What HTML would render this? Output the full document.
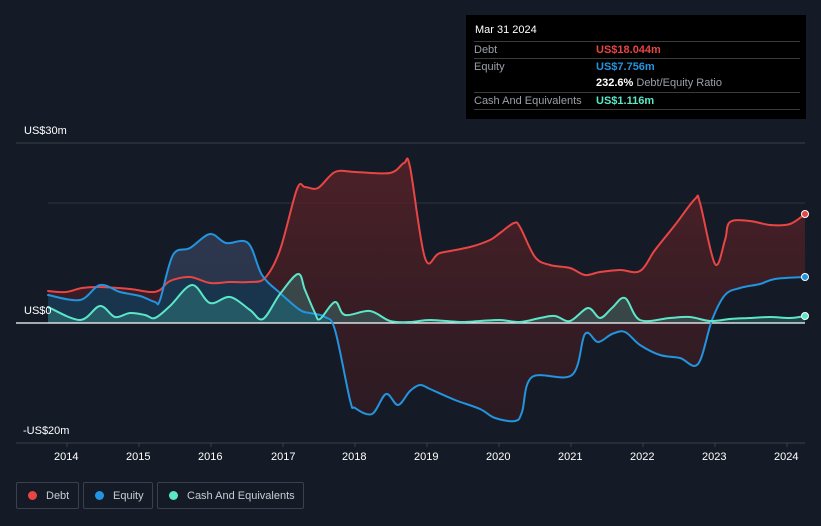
<!DOCTYPE html>
<html><head><meta charset="utf-8"><style>
body{margin:0;width:821px;height:526px;background:#151b26;font-family:"Liberation Sans",sans-serif;overflow:hidden;position:relative}
.t{position:absolute;color:#fff;font-size:11px}
.lg{position:absolute;top:482px;height:27px;border:1px solid #3a404c;border-radius:2px;color:#c9ccd1;font-size:11px;line-height:27px;box-sizing:border-box}
.lg i{display:inline-block;width:9px;height:9px;border-radius:50%;margin:0 9px 0 11px;vertical-align:-1px}
#tt{position:absolute;left:466px;top:15px;width:340px;height:104px;background:#000;}
#tt .r{position:absolute;left:8px;right:6px;height:17px;border-top:1px solid #3a3a3a;font-size:11px;color:#9aa0a6;line-height:17px}
#tt .v{position:absolute;left:122px}
</style></head><body>
<svg id="s" width="821" height="526" style="position:absolute;left:0;top:0">
<defs>
<linearGradient id="gd" x1="0" y1="0" x2="0" y2="1"><stop offset="0" stop-color="#5a2228" stop-opacity=".8"/><stop offset="1" stop-color="#3a1a20" stop-opacity=".6"/></linearGradient>
</defs>
<line x1="16" y1="143" x2="805" y2="143" stroke="#3a404a"/>
<line x1="48" y1="203" x2="805" y2="203" stroke="#30363f"/>
<line x1="16" y1="443" x2="805" y2="443" stroke="#3a404a"/>
<g stroke="#3a404a"><line x1="67" y1="443" x2="67" y2="447"/><line x1="139" y1="443" x2="139" y2="447"/><line x1="211" y1="443" x2="211" y2="447"/><line x1="283" y1="443" x2="283" y2="447"/><line x1="355" y1="443" x2="355" y2="447"/><line x1="427" y1="443" x2="427" y2="447"/><line x1="499" y1="443" x2="499" y2="447"/><line x1="571" y1="443" x2="571" y2="447"/><line x1="643" y1="443" x2="643" y2="447"/><line x1="715" y1="443" x2="715" y2="447"/><line x1="787" y1="443" x2="787" y2="447"/></g>
<path id="fd" fill="url(#gd)"/>
<path id="fe" fill="#1e4a6e" fill-opacity=".55"/>
<path id="fc" fill="#3aa89a" fill-opacity=".3"/>
<line x1="16" y1="323" x2="805" y2="323" stroke="#fff" stroke-width="1.2"/>
<g fill="none" stroke-width="2" stroke-linejoin="round" stroke-linecap="round">
<path id="ld" stroke="#e84545"/><path id="le" stroke="#2394df"/><path id="lc" stroke="#5ce6c8"/>
</g>
<circle cx="805" cy="214" r="3.5" fill="#e84545" stroke="#fff" stroke-width="1"/>
<circle cx="805" cy="277" r="3.5" fill="#2394df" stroke="#fff" stroke-width="1"/>
<circle cx="805" cy="316" r="3.5" fill="#5ce6c8" stroke="#fff" stroke-width="1"/>
</svg>
<script>
var D=[48,291,66,292,82,288,100,287,130,289,150,292,160,290,170,281,190,277,210,283,230,282,250,282,265,278,280,250,297,189,305,187,318,188,335,172,355,172,390,173,404,163,410,167,425,258,440,253,470,247,490,240,500,233,514,223,520,227,535,257,550,265,570,268,585,275,600,272,620,270,640,271,655,250,675,225,695,199,700,203,715,264,725,240,730,222,750,221,770,225,790,224,805,214];
var E=[48,295,80,300,100,285,120,292,140,296,155,302,160,300,173,255,190,248,210,234,226,243,248,243,262,275,280,293,300,310,310,313,325,317,335,330,350,400,355,408,372,414,386,394,398,405,410,391,420,385,430,389,455,400,480,409,495,418,515,421,522,412,532,377,572,375,585,334,598,342,612,334,625,332,640,345,660,355,680,358,698,364,712,320,725,295,740,288,760,284,775,279,805,277];
var C=[48,307,80,320,100,306,115,317,130,313,145,315,155,318,170,306,192,285,210,303,230,297,250,310,263,319,280,294,298,274,305,290,315,313,320,319,335,302,345,315,370,311,390,321,410,322,430,320,460,322,480,321,500,320,520,322,540,318,555,316,570,321,588,308,600,318,612,308,625,298,640,320,670,318,690,317,710,321,730,319,750,318,770,317,790,318,805,316];
function pts(a){var p=[];for(var i=0;i<a.length;i+=2)p.push([a[i],a[i+1]]);return p}
function seg(p){var s="";for(var i=0;i<p.length-1;i++){var p0=p[i-1]||p[i],p1=p[i],p2=p[i+1],p3=p[i+2]||p2,k=6;
s+=" C"+(p1[0]+(p2[0]-p0[0])/k)+","+(p1[1]+(p2[1]-p0[1])/k)+" "+(p2[0]-(p3[0]-p1[0])/k)+","+(p2[1]-(p3[1]-p1[1])/k)+" "+p2[0]+","+p2[1];}return s}
function path(a){var p=pts(a);return "M"+p[0][0]+","+p[0][1]+seg(p)}
var d=pts(D),e=pts(E),c=pts(C);
function g(id,v){document.getElementById(id).setAttribute("d",v)}
g("ld",path(D));g("le",path(E));g("lc",path(C));
var er=e.slice().reverse();
g("fd",path(D)+" L"+er[0][0]+","+er[0][1]+seg(er)+" Z");
var eu=e.filter(function(q){return q[0]<=325});
g("fe","M"+eu[0][0]+","+eu[0][1]+seg(eu)+" L330,323 L48,323 Z");
g("fc",path(C)+" L805,323 L48,323 Z");
</script>
<div class="t" style="left:24px;top:125px">US$30m</div>
<div class="t" style="left:24px;top:305px">US$0</div>
<div class="t" style="left:23px;top:425px">-US$20m</div>
<div class="t" style="left:54px;top:451px">2014</div><div class="t" style="left:126px;top:451px">2015</div><div class="t" style="left:198px;top:451px">2016</div><div class="t" style="left:271px;top:451px">2017</div><div class="t" style="left:342px;top:451px">2018</div><div class="t" style="left:414px;top:451px">2019</div><div class="t" style="left:486px;top:451px">2020</div><div class="t" style="left:558px;top:451px">2021</div><div class="t" style="left:630px;top:451px">2022</div><div class="t" style="left:702px;top:451px">2023</div><div class="t" style="left:774px;top:451px">2024</div>
<div class="lg" style="left:16px;width:63px"><i style="background:#e84545"></i>Debt</div>
<div class="lg" style="left:83px;width:70px"><i style="background:#2394df"></i>Equity</div>
<div class="lg" style="left:157px;width:147px"><i style="background:#5ce6c8"></i>Cash And Equivalents</div>
<div id="tt">
<div style="position:absolute;left:9px;top:9px;color:#fff;font-size:11px">Mar 31 2024</div>
<div class="r" style="top:26px">Debt<span class="v" style="color:#e84545;font-weight:bold">US$18.044m</span></div>
<div class="r" style="top:43px">Equity<span class="v" style="color:#2394df;font-weight:bold">US$7.756m</span></div>
<div class="r" style="top:60px;border-top:none"><span class="v"><b style="color:#fff">232.6%</b> Debt/Equity Ratio</span></div>
<div class="r" style="top:77px">Cash And Equivalents<span class="v" style="color:#5ce6c8;font-weight:bold">US$1.116m</span></div>
<div class="r" style="top:94px;height:0"></div>
</div>
</body></html>
